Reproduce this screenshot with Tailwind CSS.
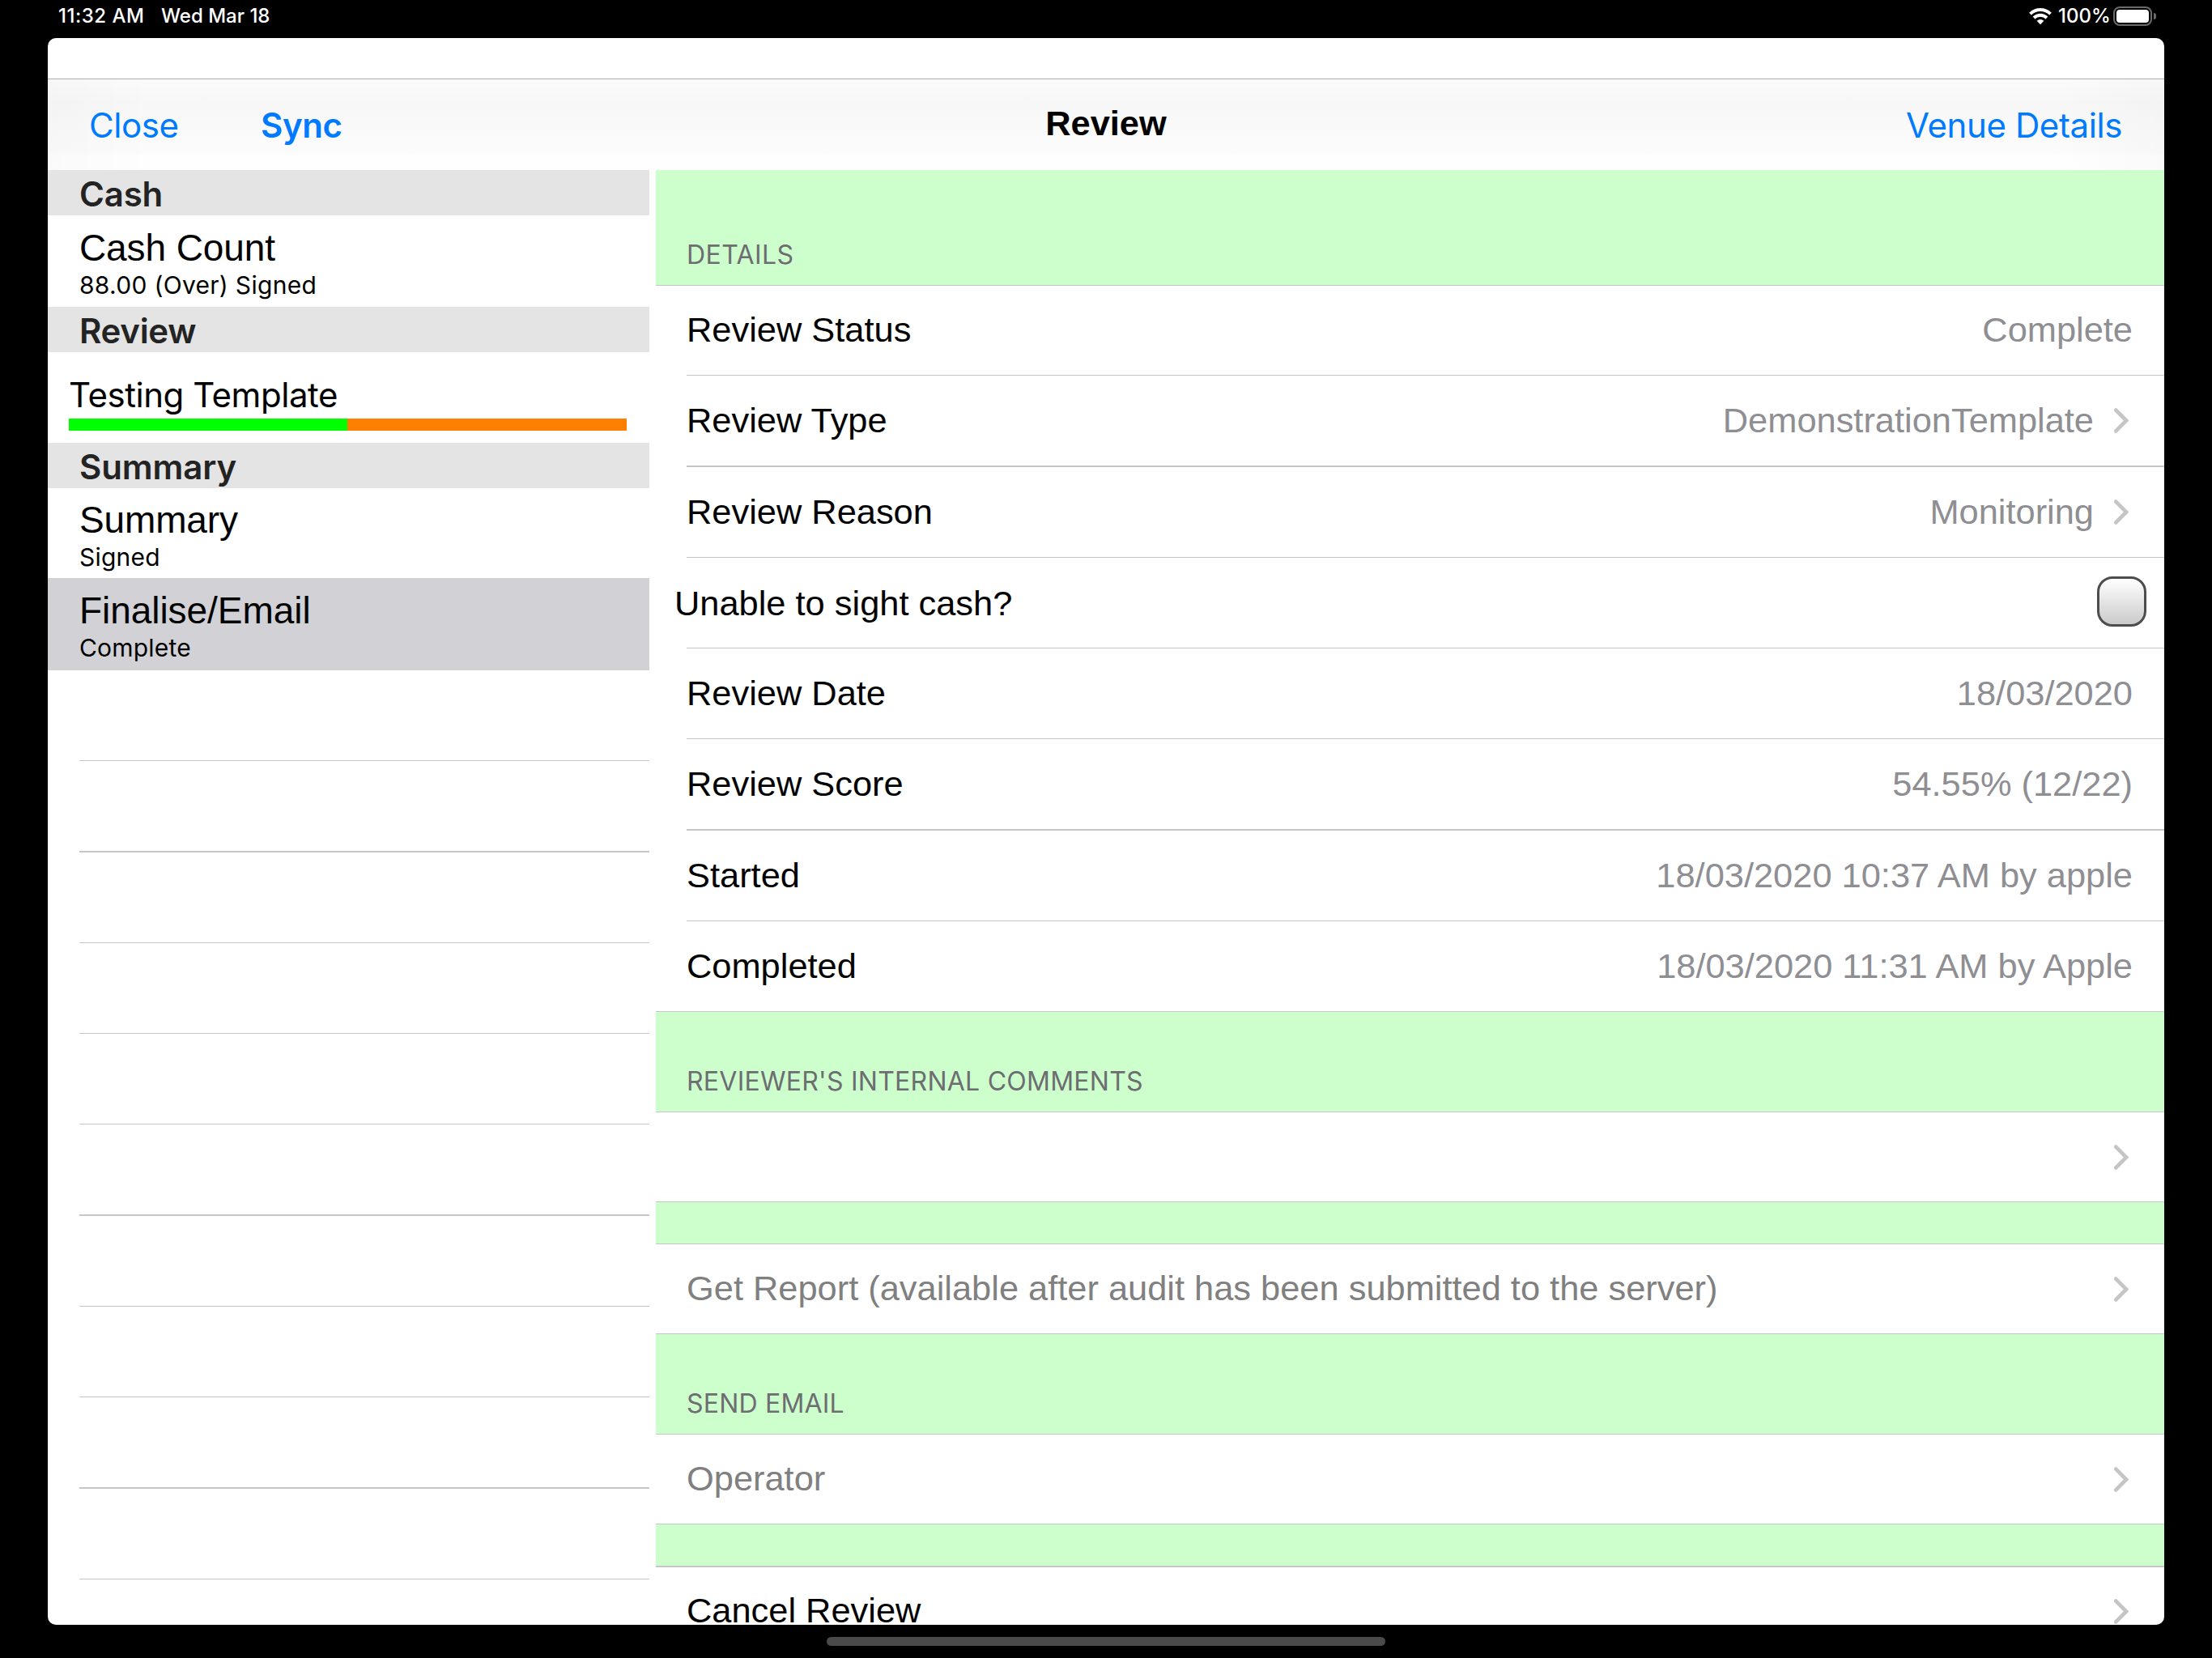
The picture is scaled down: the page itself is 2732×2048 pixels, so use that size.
<!DOCTYPE html>
<html lang="en">
<head>
<meta charset="utf-8">
<title>Review</title>
<script src="https://cdn.jsdelivr.net/npm/@tailwindcss/browser@4"></script>
</head>
<body class="bg-black">
<svg class="hidden">
  <symbol id="chevron" viewBox="0 0 18 31"><path d="M2.3 2.6 15.2 15.5 2.3 28.4" fill="none" stroke="#c5c5c8" stroke-width="4.8" stroke-linecap="round" stroke-linejoin="miter"/></symbol>
</svg>
<div class="flex h-[2048px] w-[2732px] flex-col overflow-hidden bg-black font-['Liberation_Sans',Arial,sans-serif] whitespace-nowrap">

  <!-- Status bar -->
  <header class="flex h-[47px] shrink-0 justify-between pr-[69px] pl-[72px] font-[Inter,sans-serif] text-[24px] leading-[40px] font-medium text-white">
    <div class="flex">
      <span class="w-[127px] tracking-[0.5px]">11:32 AM</span>
      <span>Wed Mar 18</span>
    </div>
    <div class="flex">
      <svg class="mt-[9px] mr-[8px] h-[22px] w-[28px]" viewBox="0 0 28 22" fill="none" stroke="#fff" stroke-width="3.9">
        <path d="M1.5 8.2a17.7 17.7 0 0 1 25 0"/>
        <path d="M6 13a11.4 11.4 0 0 1 16 0"/>
        <path d="M14 21.2 9.7 16.8a6.2 6.2 0 0 1 8.6 0z" fill="#fff" stroke="none"/>
      </svg>
      <span class="w-[68px]">100%</span>
      <div class="mt-[8px] h-[24px] w-[48px] rounded-[8px] border-2 border-[#6a6a6a] p-[2px]"><div class="h-full rounded-[4px] bg-white"></div></div>
      <div class="mt-[16px] ml-[2px] h-[8px] w-[3px] rounded-r-full bg-[#6a6a6a]"></div>
    </div>
  </header>

  <!-- App window -->
  <main class="ml-[59px] flex h-[1960px] w-[2614px] shrink-0 flex-col overflow-hidden rounded-[10px] bg-white">
    <div class="h-[51px] shrink-0 border-b border-[#acacac]"></div>
    <nav class="grid h-[112px] shrink-0 grid-cols-3 items-center bg-[linear-gradient(90deg,#00000004,transparent_5%,transparent_95%,#00000004),linear-gradient(#fbfbfb,#f7f7f7_25%,#fafafa_60%,#fbfbfb_80%,#fefefe_86%,#fefefe)] font-[Inter,sans-serif] text-[42px] tracking-[-0.4px] text-[#007aff]">
      <div class="flex pl-[51px]"><span class="w-[212px]">Close</span><span class="font-semibold">Sync</span></div>
      <h1 class="pb-[3px] text-center font-['Liberation_Sans',Arial,sans-serif] text-[43.4px] font-bold tracking-normal text-black">Review</h1>
      <div class="pr-[52px] text-right">Venue Details</div>
    </nav>

    <div class="flex min-h-0 flex-1 gap-[8px]">
      <!-- Section list -->
      <aside class="w-[743px] shrink-0">
        <h2 class="h-[56px] bg-[#e4e4e4] pt-[2px] pl-[39px] font-[Inter,sans-serif] text-[42px] leading-[56px] font-semibold tracking-[-0.2px] text-[#232323]">Cash</h2>
        <div class="h-[113px] pt-[12px] pl-[39px]">
          <div class="text-[46px] leading-[56px] tracking-[-0.1px]">Cash Count</div>
          <div class="pt-px font-[Inter,sans-serif] text-[30px] leading-[34px] tracking-[0.3px]">88.00 (Over) Signed</div>
        </div>
        <h2 class="h-[56px] bg-[#e4e4e4] pt-[2px] pl-[39px] font-[Inter,sans-serif] text-[42px] leading-[56px] font-semibold tracking-[-0.3px] text-[#232323]">Review</h2>
        <div class="h-[112px] px-[26px] pt-[22px]">
          <div class="h-[60px] pt-px font-[Inter,sans-serif] text-[42px] leading-[60px] tracking-[-0.45px]">Testing Template</div>
          <div class="flex h-[15px] w-[689px]"><div class="w-[344px] bg-[#00ff00]"></div><div class="flex-1 bg-[#ff8000]"></div></div>
        </div>
        <h2 class="h-[56px] bg-[#e4e4e4] pt-[2px] pl-[39px] font-[Inter,sans-serif] text-[42px] leading-[56px] font-semibold tracking-[-0.1px] text-[#232323]">Summary</h2>
        <div class="h-[111px] pt-[11px] pl-[39px]">
          <div class="text-[46px] leading-[56px] tracking-[-0.15px]">Summary</div>
          <div class="pt-px font-[Inter,sans-serif] text-[30px] leading-[34px] tracking-[0.2px]">Signed</div>
        </div>
        <div class="h-[114px] bg-[#d1d1d6] pt-[12px] pl-[39px]">
          <div class="text-[46px] leading-[56px] tracking-[-0.05px]">Finalise/Email</div>
          <div class="pt-px font-[Inter,sans-serif] text-[30px] leading-[34px] tracking-[0.2px]">Complete</div>
        </div>
        <div class="ml-[39px] h-[112px] border-b border-[#c6c6c8]"></div>
        <div class="ml-[39px] h-[113px] border-b-2 border-[#c6c6c8]"></div>
        <div class="ml-[39px] h-[112px] border-b border-[#c6c6c8]"></div>
        <div class="ml-[39px] h-[112px] border-b border-[#c6c6c8]"></div>
        <div class="ml-[39px] h-[112px] border-b border-[#c6c6c8]"></div>
        <div class="ml-[39px] h-[113px] border-b-2 border-[#c6c6c8]"></div>
        <div class="ml-[39px] h-[112px] border-b border-[#c6c6c8]"></div>
        <div class="ml-[39px] h-[112px] border-b border-[#c6c6c8]"></div>
        <div class="ml-[39px] h-[113px] border-b-2 border-[#c6c6c8]"></div>
        <div class="ml-[39px] h-[112px] border-b border-[#c6c6c8]"></div>
      </aside>

      <!-- Review details -->
      <section class="min-w-0 flex-1 overflow-hidden text-[43.4px]">
        <div class="flex h-[143px] items-end border-b border-[#c6c6c8] bg-[#ccffcc] pb-[17px] pl-[38px]"><h3 class="font-[Inter,sans-serif] text-[32px] leading-[40px] tracking-[0.4px] text-[#6d6d72]">DETAILS</h3></div>

        <div class="ml-[38px] flex h-[111px] items-center justify-between border-b border-[#c6c6c8] pr-[39px]"><span>Review Status</span><span class="text-[#8e8e93]">Complete</span></div>
        <div class="ml-[38px] flex h-[113px] items-center border-b-2 border-[#c6c6c8] pr-[44px]"><span class="flex-1">Review Type</span><span class="text-[#8e8e93]">DemonstrationTemplate</span><svg class="ml-[25px] h-[31px] w-[18px]"><use href="#chevron"/></svg></div>
        <div class="ml-[38px] flex h-[112px] items-center border-b border-[#c6c6c8] pr-[44px]"><span class="flex-1">Review Reason</span><span class="text-[#8e8e93]">Monitoring</span><svg class="ml-[25px] h-[31px] w-[18px]"><use href="#chevron"/></svg></div>
        <div class="ml-[38px] flex h-[112px] items-center justify-between border-b border-[#c6c6c8] pr-[22px]"><span class="-ml-[15px] pt-[2px]">Unable to sight cash?</span><span class="mb-[3px] h-[62px] w-[61px] rounded-[19px] border-[3px] border-[#4d4d4d] bg-linear-to-b from-white to-[#cbcbcb]"></span></div>
        <div class="ml-[38px] flex h-[112px] items-center justify-between border-b border-[#c6c6c8] pr-[39px]"><span>Review Date</span><span class="text-[#8e8e93]">18/03/2020</span></div>
        <div class="ml-[38px] flex h-[113px] items-center justify-between border-b-2 border-[#c6c6c8] pr-[39px]"><span>Review Score</span><span class="text-[#8e8e93]">54.55% (12/22)</span></div>
        <div class="ml-[38px] flex h-[112px] items-center justify-between border-b border-[#c6c6c8] pr-[39px]"><span>Started</span><span class="text-[#8e8e93]">18/03/2020 10:37 AM by apple</span></div>
        <div class="flex h-[112px] items-center justify-between border-b border-[#c6c6c8] pr-[39px] pl-[38px]"><span>Completed</span><span class="text-[#8e8e93]">18/03/2020 11:31 AM by Apple</span></div>

        <div class="flex h-[124px] items-end border-b border-[#c6c6c8] bg-[#ccffcc] pb-[17px] pl-[38px]"><h3 class="font-[Inter,sans-serif] text-[32px] leading-[40px] tracking-[0.25px] text-[#6d6d72]">REVIEWER'S INTERNAL COMMENTS</h3></div>
        <div class="flex h-[111px] items-center justify-end border-b border-[#c6c6c8] pr-[44px]"><svg class="h-[31px] w-[18px]"><use href="#chevron"/></svg></div>
        <div class="h-[52px] border-b border-[#c6c6c8] bg-[#ccffcc]"></div>
        <div class="flex h-[111px] items-center justify-between border-b border-[#c6c6c8] pr-[44px] pl-[38px]"><span class="text-[#808080]">Get Report (available after audit has been submitted to the server)</span><svg class="h-[31px] w-[18px]"><use href="#chevron"/></svg></div>
        <div class="flex h-[124px] items-end border-b border-[#c6c6c8] bg-[#ccffcc] pb-[17px] pl-[38px]"><h3 class="font-[Inter,sans-serif] text-[32px] leading-[40px] tracking-[0.2px] text-[#6d6d72]">SEND EMAIL</h3></div>
        <div class="flex h-[111px] items-center justify-between border-b border-[#c6c6c8] pr-[44px] pl-[38px]"><span class="text-[#808080]">Operator</span><svg class="h-[31px] w-[18px]"><use href="#chevron"/></svg></div>
        <div class="h-[53px] border-b-2 border-[#c6c6c8] bg-[#ccffcc]"></div>
        <div class="flex h-[109px] items-center justify-between pr-[44px] pl-[38px]"><span class="pb-[2px]">Cancel Review</span><svg class="h-[31px] w-[18px]"><use href="#chevron"/></svg></div>
      </section>
    </div>
  </main>

  <!-- Home indicator -->
  <div class="mt-[15px] ml-[1021px] h-[11px] w-[690px] shrink-0 rounded-full bg-[#4a4a4a]"></div>
</div>
</body>
</html>
